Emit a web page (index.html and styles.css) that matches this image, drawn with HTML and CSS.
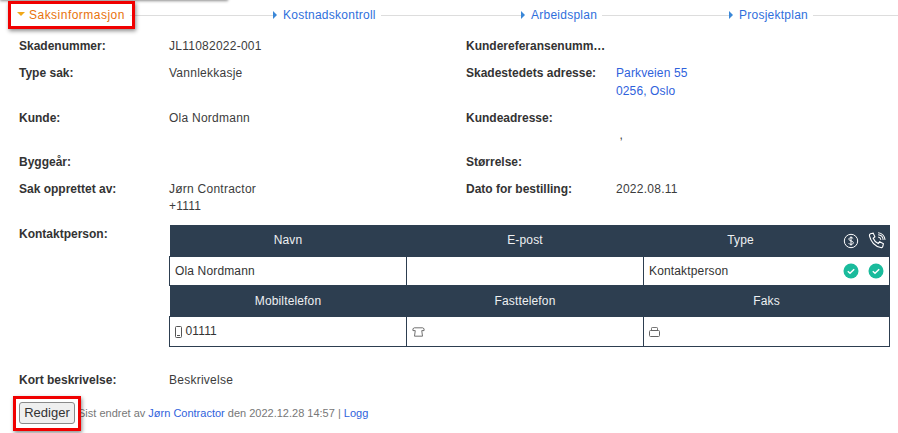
FILE: index.html
```html
<!DOCTYPE html>
<html lang="no">
<head>
<meta charset="utf-8">
<title>Saksinformasjon</title>
<link rel="stylesheet" href="styles.css">
</head>
<body>
<div class="topshadow"></div>
<nav class="tabs">
  <div class="tab active"><span class="tri-down"></span><span class="tab-label">Saksinformasjon</span><span class="tab-line"></span></div>
  <div class="tab"><span class="tri-right"></span><span class="tab-label">Kostnadskontroll</span><span class="tab-line"></span></div>
  <div class="tab"><span class="tri-right"></span><span class="tab-label">Arbeidsplan</span><span class="tab-line"></span></div>
  <div class="tab"><span class="tri-right"></span><span class="tab-label">Prosjektplan</span><span class="tab-line"></span></div>
</nav>
<main class="info">
  <div class="row">
    <div class="label">Skadenummer:</div><div class="value">JL11082022-001</div>
    <div class="label">Kundereferansenumm…</div><div class="value"></div>
  </div>
  <div class="row row-addr">
    <div class="label">Type sak:</div><div class="value">Vannlekkasje</div>
    <div class="label">Skadestedets adresse:</div><div class="value link addr">Parkveien 55<br>0256, Oslo</div>
  </div>
  <div class="row">
    <div class="label">Kunde:</div><div class="value">Ola Nordmann</div>
    <div class="label">Kundeadresse:</div><div class="value"><br>&nbsp;,</div>
  </div>
  <div class="row">
    <div class="label">Byggeår:</div><div class="value"></div>
    <div class="label">Størrelse:</div><div class="value"></div>
  </div>
  <div class="row">
    <div class="label">Sak opprettet av:</div><div class="value">Jørn Contractor<br>+1111</div>
    <div class="label">Dato for bestilling:</div><div class="value">2022.08.11</div>
  </div>
  <div class="contact">
    <div class="label contact-label">Kontaktperson:</div>
    <table class="ctable">
      <colgroup><col class="c1"><col class="c2"><col class="c3"></colgroup>
      <tr class="head">
        <th>Navn</th><th>E-post</th>
        <th class="type-head"><span>Type</span>
          <span class="icons">
            <svg class="ico" viewBox="0 0 16 16"><circle cx="8" cy="8" r="6.700" fill="none" stroke="#fff" stroke-width="1"/><path d="M10.200 5.700C9.800 4.900 9 4.600 8 4.600c-1.200 0-2.100.600-2.100 1.600 0 2.200 4.400 1.200 4.400 3.500 0 1-.900 1.700-2.300 1.700-1.100 0-1.900-.400-2.300-1.200M8 3.400v9.200" fill="none" stroke="#fff" stroke-width="1"/></svg>
            <svg class="ico ico-phone" viewBox="0 0 16 16"><path d="M2.200 1.600 4.600 1l1.500 3.300-1.500 1.200c.800 2 2.400 3.700 4.500 4.700l1.300-1.500 3.300 1.700-.600 2.500c-.200.800-1 1.100-1.800.900C6.200 12.600 2.600 8.700 1.300 3.400c-.100-.800.200-1.500.900-1.800z" fill="none" stroke="#fff" stroke-width="1"/><path d="M9 4.500c1.300.200 2.300 1.200 2.500 2.500M9 2.500c2.500.200 4.300 2 4.500 4.500M9 .700c3.400.200 6 2.900 6.200 6.300" fill="none" stroke="#fff" stroke-width=".9"/></svg>
          </span>
        </th>
      </tr>
      <tr class="body first">
        <td>Ola Nordmann</td><td></td>
        <td class="type-cell"><span>Kontaktperson</span>
          <span class="icons checks">
            <svg class="ico" viewBox="0 0 16 16"><circle cx="8" cy="8" r="7.500" fill="#1abb9c"/><path d="M4.800 8.200 7 10.200l4.200-4" fill="none" stroke="#fff" stroke-width="1.500"/></svg>
            <svg class="ico" viewBox="0 0 16 16"><circle cx="8" cy="8" r="7.500" fill="#1abb9c"/><path d="M4.800 8.200 7 10.200l4.200-4" fill="none" stroke="#fff" stroke-width="1.500"/></svg>
          </span>
        </td>
      </tr>
      <tr class="head">
        <th>Mobiltelefon</th><th>Fasttelefon</th><th>Faks</th>
      </tr>
      <tr class="body">
        <td><svg class="small" viewBox="0 0 7 12"><rect x=".5" y=".5" width="6" height="11" rx="1" fill="none" stroke="#555" stroke-width="1"/><path d="M2 9.500h3" stroke="#555" stroke-width="1"/></svg> 01111</td>
        <td><svg class="small wide" viewBox="0 0 14 10"><path d="M1 1.500 2.500.5h9L13 1.500v2h-2.500l.8 6H2.700l.8-6H1z" fill="none" stroke="#666" stroke-width="1"/></svg></td>
        <td><svg class="small fax" viewBox="0 0 11 10"><path d="M2.500 4V1.200Q2.500.5 3.200.5h4.600Q8.500.5 8.500 1.200V4" fill="none" stroke="#777" stroke-width="1"/><rect x=".5" y="3.500" width="10" height="6" rx="1" fill="none" stroke="#666" stroke-width="1"/></svg></td>
      </tr>
    </table>
  </div>
  <div class="row short">
    <div class="label">Kort beskrivelse:</div><div class="value">Beskrivelse</div>
  </div>
  <footer class="foot">
    <button class="edit" type="button">Rediger</button>
    <span class="meta">Sist endret av <a class="link">Jørn Contractor</a> den 2022.12.28 14:57 | <a class="link">Logg</a></span>
  </footer>
</main>
<div class="mark mark-tab"></div>
<div class="mark mark-btn"></div>
</body>
</html>
```
FILE: styles.css
```css
* { box-sizing: border-box; }
html, body { margin: 0; padding: 0; }
body {
  width: 898px;
  height: 433px;
  overflow: hidden;
  position: relative;
  background: #fff;
  color: #333;
  font: 12px/17px "Liberation Sans", Arial, sans-serif;
  letter-spacing: .25px;
}
.topshadow {
  position: absolute;
  left: 0; top: -4px;
  width: 228px; height: 4px;
  box-shadow: 0 1px 3px rgba(0,0,0,.45);
}
.tabs {
  display: grid;
  grid-template-columns: 256px 248px 208px 169px;
  padding: 7px 0 0 17px;
  height: 38px;
}
.tab {
  display: flex;
  align-items: center;
  height: 17px;
  color: #2f6fdc;
  letter-spacing: .25px;
}
.tab.active { color: #e8730c; letter-spacing: .48px; }
.tri-down {
  width: 0; height: 0;
  margin-right: 4px;
  margin-top: -3px;
  border-left: 4px solid transparent;
  border-right: 4px solid transparent;
  border-top: 4px solid #f0a818;
}
.tri-right {
  width: 0; height: 0;
  margin-right: 6px;
  margin-top: -2px;
  border-top: 4px solid transparent;
  border-bottom: 4px solid transparent;
  border-left: 4px solid #3a87d8;
}
.tab-label { white-space: nowrap; }
.tab-line {
  flex: 1;
  height: 1px;
  margin-left: 5px;
  background: #ddd;
}
.info { padding-left: 19px; }
.row {
  display: grid;
  grid-template-columns: 150px 297px 150px 1fr;
  padding-bottom: 10px;
}
.label { font-weight: bold; white-space: nowrap; letter-spacing: 0; }
.value { color: #3c3c3c; }
.link { color: #2f62dc; }
.addr { letter-spacing: .12px; line-height: 17.5px; }
.contact {
  display: grid;
  grid-template-columns: 150px 720px;
}
.contact-label { padding-top: 1px; }
.ctable {
  width: 720px;
  height: 121px;
  border-collapse: collapse;
  table-layout: fixed;
  letter-spacing: .15px;
}
.c1, .c2 { width: 237px; }
.c3 { width: 246px; }
.ctable th, .ctable td { padding: 0 5px; }
.head { background: #2d3e50; color: #eef0f2; height: 31px; }
.head th { font-weight: normal; text-align: center; padding-top: 1px; }
.body { height: 30px; }
.body.first { height: 29px; }
.body td { border: 1px solid #2d3e50; color: #333; padding-top: 1px; }
.ctable .type-head { position: relative; padding-right: 57px; }
.type-cell { position: relative; }
.icons {
  position: absolute;
  right: 4px;
  top: 50%;
  margin-top: -8px;
  display: flex;
  align-items: center;
  gap: 9px;
}
.checks { right: 5px; }
.ico { width: 16px; height: 16px; display: block; }
.ico-phone { width: 18px; height: 18px; }
.small { width: 7px; height: 12px; vertical-align: -3px; }
.small.wide { width: 13px; height: 10px; vertical-align: -2px; }
.small.fax { width: 11px; height: 10px; vertical-align: -2px; }
.short { margin-top: 25px; padding-bottom: 13px; }
.foot { display: flex; align-items: center; gap: 3px; height: 22px; }
.edit {
  width: 56px; height: 22px;
  padding: 0;
  background: #efefef;
  border: 1px solid #8a8a8a;
  border-radius: 3px;
  color: #333;
  font: inherit;
  font-size: 13px;
  letter-spacing: 0;
}
.meta { color: #777; font-size: 11px; letter-spacing: 0; padding-top: 1px; }
.mark {
  position: absolute;
  border: 3px solid #f00000;
  box-shadow: 1px 2px 4px rgba(0,0,0,.45);
  pointer-events: none;
}
.mark-tab { left: 8px; top: 1px; width: 127px; height: 28px; }
.mark-btn { left: 13px; top: 396px; width: 68px; height: 35px; }
```
